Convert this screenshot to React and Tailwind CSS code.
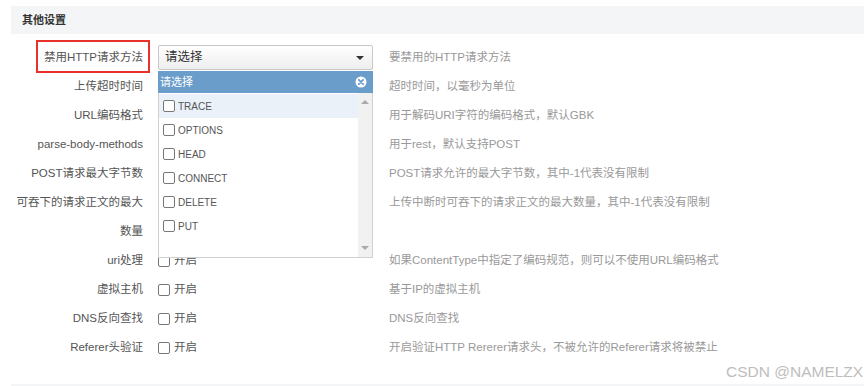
import React from 'react';

const rows = [
  { label: '禁用HTTP请求方法', desc: '要禁用的HTTP请求方法', type: 'select', boxed: true },
  { label: '上传超时时间', desc: '超时时间，以毫秒为单位' },
  { label: 'URL编码格式', desc: '用于解码URI字符的编码格式，默认GBK' },
  { label: 'parse-body-methods', desc: '用于rest，默认支持POST' },
  { label: 'POST请求最大字节数', desc: 'POST请求允许的最大字节数，其中-1代表没有限制' },
  { label: '可吞下的请求正文的最大数量', desc: '上传中断时可吞下的请求正文的最大数量，其中-1代表没有限制', tall: true },
  { label: 'uri处理', desc: '如果ContentType中指定了编码规范，则可以不使用URL编码格式', type: 'check' },
  { label: '虚拟主机', desc: '基于IP的虚拟主机', type: 'check' },
  { label: 'DNS反向查找', desc: 'DNS反向查找', type: 'check' },
  { label: 'Referer头验证', desc: '开启验证HTTP Rererer请求头，不被允许的Referer请求将被禁止', type: 'check' },
];

const methods = ['TRACE', 'OPTIONS', 'HEAD', 'CONNECT', 'DELETE', 'PUT'];

const Box = () => (
  <span className="inline-block w-[12px] h-[12px] border-[1.5px] border-[#777] rounded-[2px] bg-white shrink-0"></span>
);

// 下拉框（展开状态）
const MethodSelect = () => (
  <div className="relative w-[215px] h-[25px]">
    <div className="h-full flex items-center justify-between pl-[6px] pr-[8px] border border-[#c8c8c8] rounded-[2px] bg-gradient-to-b from-white to-[#eeeeee] text-[12.5px] text-[#333]">
      <span>请选择</span>
      <span className="w-0 h-0 border-l-[4px] border-r-[4px] border-t-[4px] border-l-transparent border-r-transparent border-t-[#333]"></span>
    </div>
    <div className="absolute left-0 top-[26px] w-[215px] z-10 bg-white">
      <div className="h-[22px] bg-[#6b9dca] flex items-center justify-between pl-[2px] pr-[6px] text-white text-[11px]">
        <span>请选择</span>
        <svg width="12" height="12" viewBox="0 0 12 12">
          <circle cx="6" cy="6" r="5.5" fill="#fff" />
          <path d="M3.8 3.8 L8.2 8.2 M8.2 3.8 L3.8 8.2" stroke="#6b9dca" strokeWidth="1.8" strokeLinecap="round" />
        </svg>
      </div>
      <div className="h-[165px] flex border border-t-0 border-[#d0d0d0]">
        <div className="flex-1 pt-[1px]">
          {methods.map((m, i) => (
            <div
              key={m}
              className={`h-[24px] flex items-center gap-[3px] pl-[4px] text-[10px] text-[#555] ${i === 0 ? 'bg-[#eaf1f8]' : ''}`}
            >
              <Box />
              <span>{m}</span>
            </div>
          ))}
        </div>
        <div className="w-[14px] bg-[#f1f1f1] flex flex-col items-center justify-between py-[7px]">
          <span className="w-0 h-0 border-l-[4px] border-r-[4px] border-b-[4px] border-l-transparent border-r-transparent border-b-[#aaa]"></span>
          <span className="w-0 h-0 border-l-[4px] border-r-[4px] border-t-[4px] border-l-transparent border-r-transparent border-t-[#aaa]"></span>
        </div>
      </div>
    </div>
  </div>
);

const App = () => {
  return (
    <div className="w-[864px] h-[386px] bg-white overflow-hidden relative font-['Liberation_Sans','Noto_Sans_CJK_SC',sans-serif]">
      <div className="pt-[6px] pl-[11px]">
        <div className="h-[28px] bg-[#f4f5f7] flex items-center pl-[11px] text-[11px] font-bold text-[#333]">
          其他设置
        </div>
      </div>

      <div className="pt-[9px]">
        {rows.map((r) => (
          <div key={r.label} className={`flex ${r.tall ? 'h-[58px]' : 'h-[29px]'}`}>
            <div className="ml-[13px] w-[130px] shrink-0 flex justify-end">
              <div className={`relative text-right text-[11.5px] text-[#555] leading-[29px] ${r.tall ? '' : 'whitespace-nowrap'}`}>
                {r.label}
                {r.boxed && (
                  <span className="absolute left-[-8px] right-[-7px] top-[-3px] bottom-[-1px] border-2 border-[#e8312a] pointer-events-none"></span>
                )}
              </div>
            </div>
            <div className="ml-[15px] w-[215px] shrink-0 flex items-start pt-[2px]">
              {r.type === 'select' && <MethodSelect />}
              {r.type === 'check' && (
                <div className="h-[25px] flex items-center gap-[4px] text-[11.5px] text-[#555]">
                  <Box />
                  <span>开启</span>
                </div>
              )}
            </div>
            <div className="ml-[16px] text-[11.5px] text-[#999] leading-[29px] whitespace-nowrap">
              {r.desc}
            </div>
          </div>
        ))}
      </div>

      <div className="absolute left-[726px] top-[360px] text-[15.5px] text-[#bdbdbd] whitespace-nowrap">
        CSDN @NAMELZX
      </div>
      <div className="absolute left-[11px] right-0 top-[384px] h-[2px] bg-[#f4f5f7]"></div>
    </div>
  );
};

export default App;
